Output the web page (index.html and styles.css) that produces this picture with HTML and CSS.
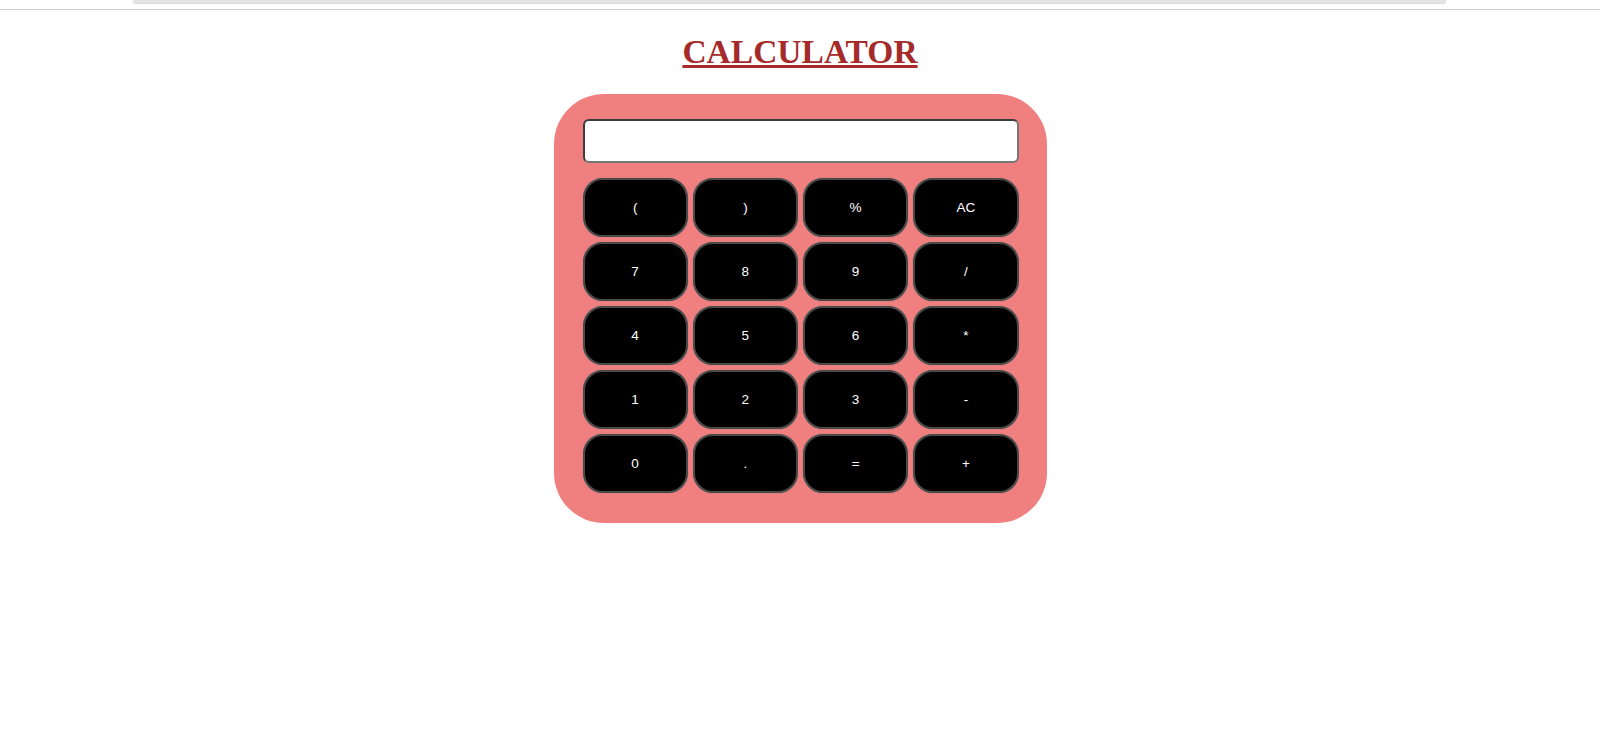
FILE: index.html
```html
<!DOCTYPE html>
<html lang="en">
<head>
<meta charset="utf-8">
<title>Calculator</title>
<link rel="stylesheet" href="styles.css">
</head>
<body>
<div class="topstrip"><div class="topbar"></div></div>
<h1 class="title">CALCULATOR</h1>
<div class="calc">
  <input class="display" type="text">
  <div class="keys">
    <button class="key">(</button>
    <button class="key">)</button>
    <button class="key">%</button>
    <button class="key">AC</button>
    <button class="key">7</button>
    <button class="key">8</button>
    <button class="key">9</button>
    <button class="key">/</button>
    <button class="key">4</button>
    <button class="key">5</button>
    <button class="key">6</button>
    <button class="key">*</button>
    <button class="key">1</button>
    <button class="key">2</button>
    <button class="key">3</button>
    <button class="key">-</button>
    <button class="key">0</button>
    <button class="key">.</button>
    <button class="key">=</button>
    <button class="key">+</button>
  </div>
</div>
</body>
</html>
```
FILE: styles.css
```css
html, body {
  margin: 0;
  padding: 0;
  background: #ffffff;
}
body {
  font-family: "Liberation Serif", "Times New Roman", serif;
}
.topstrip {
  height: 9px;
  border-bottom: 1px solid #d2d2d2;
  padding-left: 133px;
}
.topbar {
  width: 1313px;
  height: 3px;
  background: #e4e4e4;
  border-radius: 0 0 6px 6px;
  box-shadow: 0 1px 1px #d8d8d8;
}
.title {
  margin: 23px 0 24px;
  text-align: center;
  font-size: 33.5px;
  line-height: 37px;
  font-weight: bold;
  color: #a52a2a;
  text-decoration: underline;
}
.calc {
  width: 436px;
  margin: 0 auto;
  padding: 25px 28px 30px 29px;
  background: #f08080;
  border-radius: 50px;
}
.display {
  display: block;
  box-sizing: border-box;
  width: 436px;
  height: 44px;
  margin: 0 0 15px;
  padding: 0 8px;
  border: 2px solid #3c3c3c;
  border-bottom-color: #767676;
  border-right-color: #767676;
  border-radius: 6px;
  background: #ffffff;
  font-family: "Liberation Sans", Arial, sans-serif;
  font-size: 16px;
}
.keys {
  display: grid;
  grid-template-columns: repeat(4, 1fr);
  grid-auto-rows: 59px;
  column-gap: 5px;
  row-gap: 5px;
}
.key {
  margin: 0;
  padding: 0;
  background: #000000;
  color: #ffffff;
  border: 2px solid #4a4a4a;
  box-shadow: 0 0 1px #6a6a6a;
  border-radius: 20px;
  font-family: "Liberation Sans", Arial, sans-serif;
  font-size: 13.5px;
}
```
